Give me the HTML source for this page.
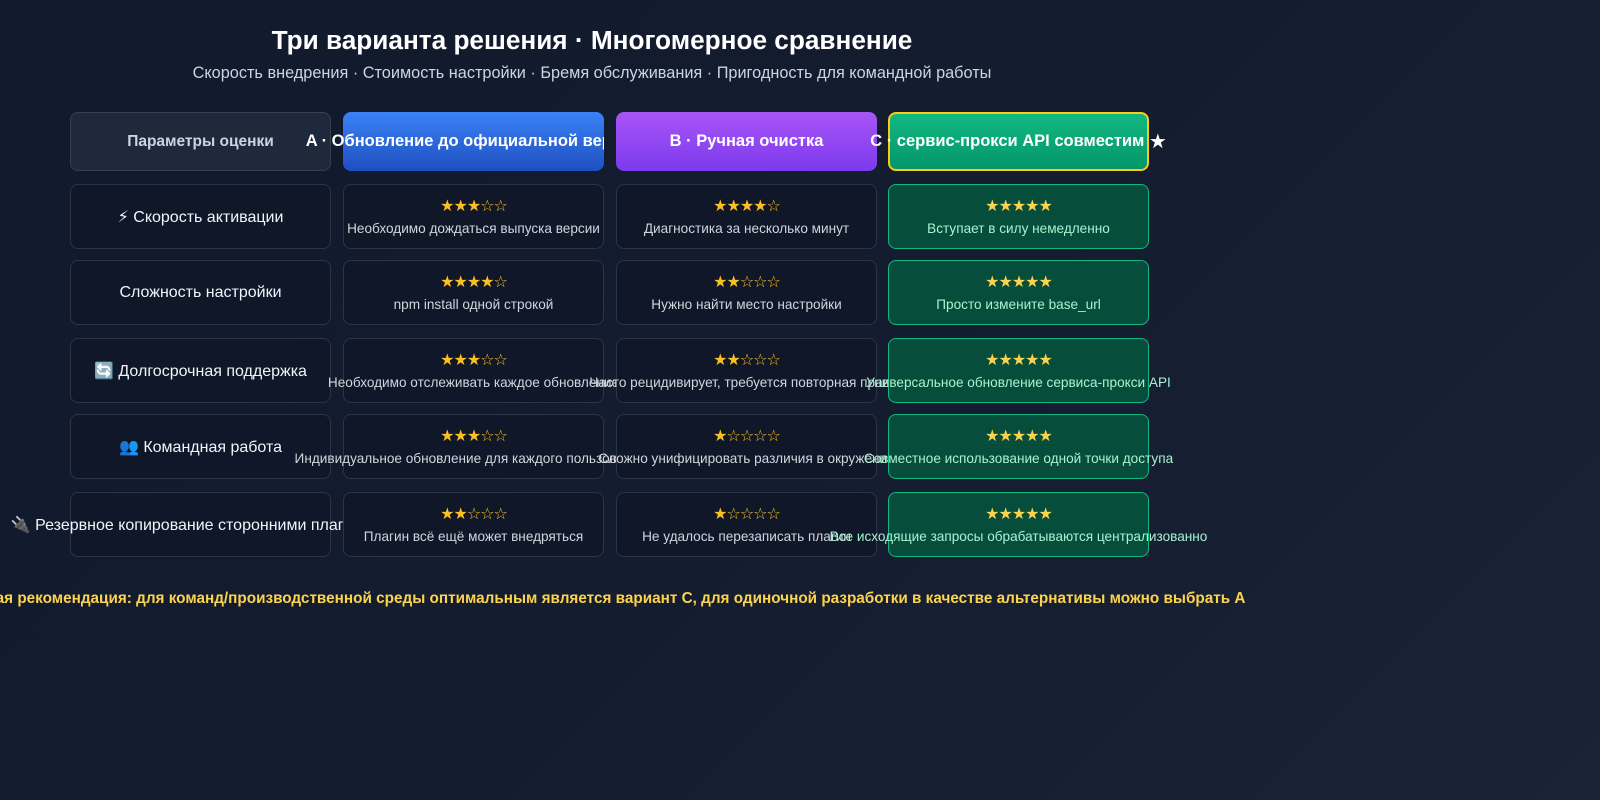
<!DOCTYPE html>
<html><head><meta charset="utf-8"><style>
*{box-sizing:border-box;margin:0;padding:0}
body{width:1600px;height:800px;overflow:hidden;background:linear-gradient(135deg,#111a2e 0%,#141c2f 50%,#1a2337 100%);font-family:"Liberation Sans","DejaVu Sans",sans-serif;color:#e5e7eb;position:relative}
.t{position:absolute;left:0;width:1184px;text-align:center;white-space:nowrap}
.c{position:absolute;width:261px;border-radius:8px;display:flex;flex-direction:column;align-items:center;justify-content:center;white-space:nowrap;border:1px solid #2b3548;background:#0f1729}
.lab{font-size:16px;color:#f1f5f9}
.h{height:59px;top:112px;font-weight:bold;font-size:16.5px;color:#fff;border:none;flex-direction:row}
.st{color:#fbbf24;font-size:16px;letter-spacing:-1px;line-height:19px}
.d{font-size:13.6px;color:#d1d5db;margin-top:5px}
.g{background:#064e3b;border:1.5px solid #10b981}
.g .d{color:#a7f3d0}
.g .st{color:#fcd34d}
.r1{top:184px;height:65px}.r2{top:260px;height:65px}.r3{top:338px;height:65px}.r4{top:414px;height:65px}.r5{top:492px;height:65px}
.x1{left:70px}.x2{left:343px}.x3{left:616px}.x4{left:888px}
</style></head><body>
<div class="t" style="top:25px;font-size:26.2px;font-weight:bold;color:#fff">Три варианта решения · Многомерное сравнение</div>
<div class="t" style="top:64px;font-size:16.3px;color:#cbd5e1">Скорость внедрения · Стоимость настройки · Бремя обслуживания · Пригодность для командной работы</div>

<div class="c h x1" style="background:#1e293b;border:1px solid #334155;color:#cbd5e1;font-size:15.5px">Параметры оценки</div>
<div class="c h x2" style="background:linear-gradient(#3b82f6,#1e4fc0);clip-path:inset(0 0 0 -100px)">A · Обновление до официальной версии</div>
<div class="c h x3" style="background:linear-gradient(#a855f7,#7c3aed)">B · Ручная очистка</div>
<div class="c h x4" style="background:linear-gradient(#10b981,#059669);border:2px solid #facc15">C · сервис-прокси API совместим&nbsp;<span style="font-size:20px">★</span></div>

<div class="c lab x1 r1">⚡ Скорость активации</div>
<div class="c x2 r1"><div class="st">★★★☆☆</div><div class="d">Необходимо дождаться выпуска версии</div></div>
<div class="c x3 r1"><div class="st">★★★★☆</div><div class="d">Диагностика за несколько минут</div></div>
<div class="c g x4 r1"><div class="st">★★★★★</div><div class="d">Вступает в силу немедленно</div></div>

<div class="c lab x1 r2">Сложность настройки</div>
<div class="c x2 r2"><div class="st">★★★★☆</div><div class="d">npm install одной строкой</div></div>
<div class="c x3 r2"><div class="st">★★☆☆☆</div><div class="d">Нужно найти место настройки</div></div>
<div class="c g x4 r2"><div class="st">★★★★★</div><div class="d">Просто измените base_url</div></div>

<div class="c lab x1 r3">🔄 Долгосрочная поддержка</div>
<div class="c x2 r3"><div class="st">★★★☆☆</div><div class="d">Необходимо отслеживать каждое обновление</div></div>
<div class="c x3 r3"><div class="st">★★☆☆☆</div><div class="d">Часто рецидивирует, требуется повторная правка</div></div>
<div class="c g x4 r3"><div class="st">★★★★★</div><div class="d">Универсальное обновление сервиса-прокси API</div></div>

<div class="c lab x1 r4">👥 Командная работа</div>
<div class="c x2 r4"><div class="st">★★★☆☆</div><div class="d">Индивидуальное обновление для каждого пользователя</div></div>
<div class="c x3 r4"><div class="st">★☆☆☆☆</div><div class="d">Сложно унифицировать различия в окружении</div></div>
<div class="c g x4 r4"><div class="st">★★★★★</div><div class="d">Совместное использование одной точки доступа</div></div>

<div class="c lab x1 r5">🔌 Резервное копирование сторонними плагинами</div>
<div class="c x2 r5"><div class="st">★★☆☆☆</div><div class="d">Плагин всё ещё может внедряться</div></div>
<div class="c x3 r5"><div class="st">★☆☆☆☆</div><div class="d">Не удалось перезаписать плагин</div></div>
<div class="c g x4 r5"><div class="st">★★★★★</div><div class="d">Все исходящие запросы обрабатываются централизованно</div></div>

<div style="position:absolute;top:589px;left:-80px;white-space:nowrap;font-size:15.3px;font-weight:bold;color:#fcd34d">💡 Итоговая рекомендация: для команд/производственной среды оптимальным является вариант C, для одиночной разработки в качестве альтернативы можно выбрать A</div>
</body></html>
